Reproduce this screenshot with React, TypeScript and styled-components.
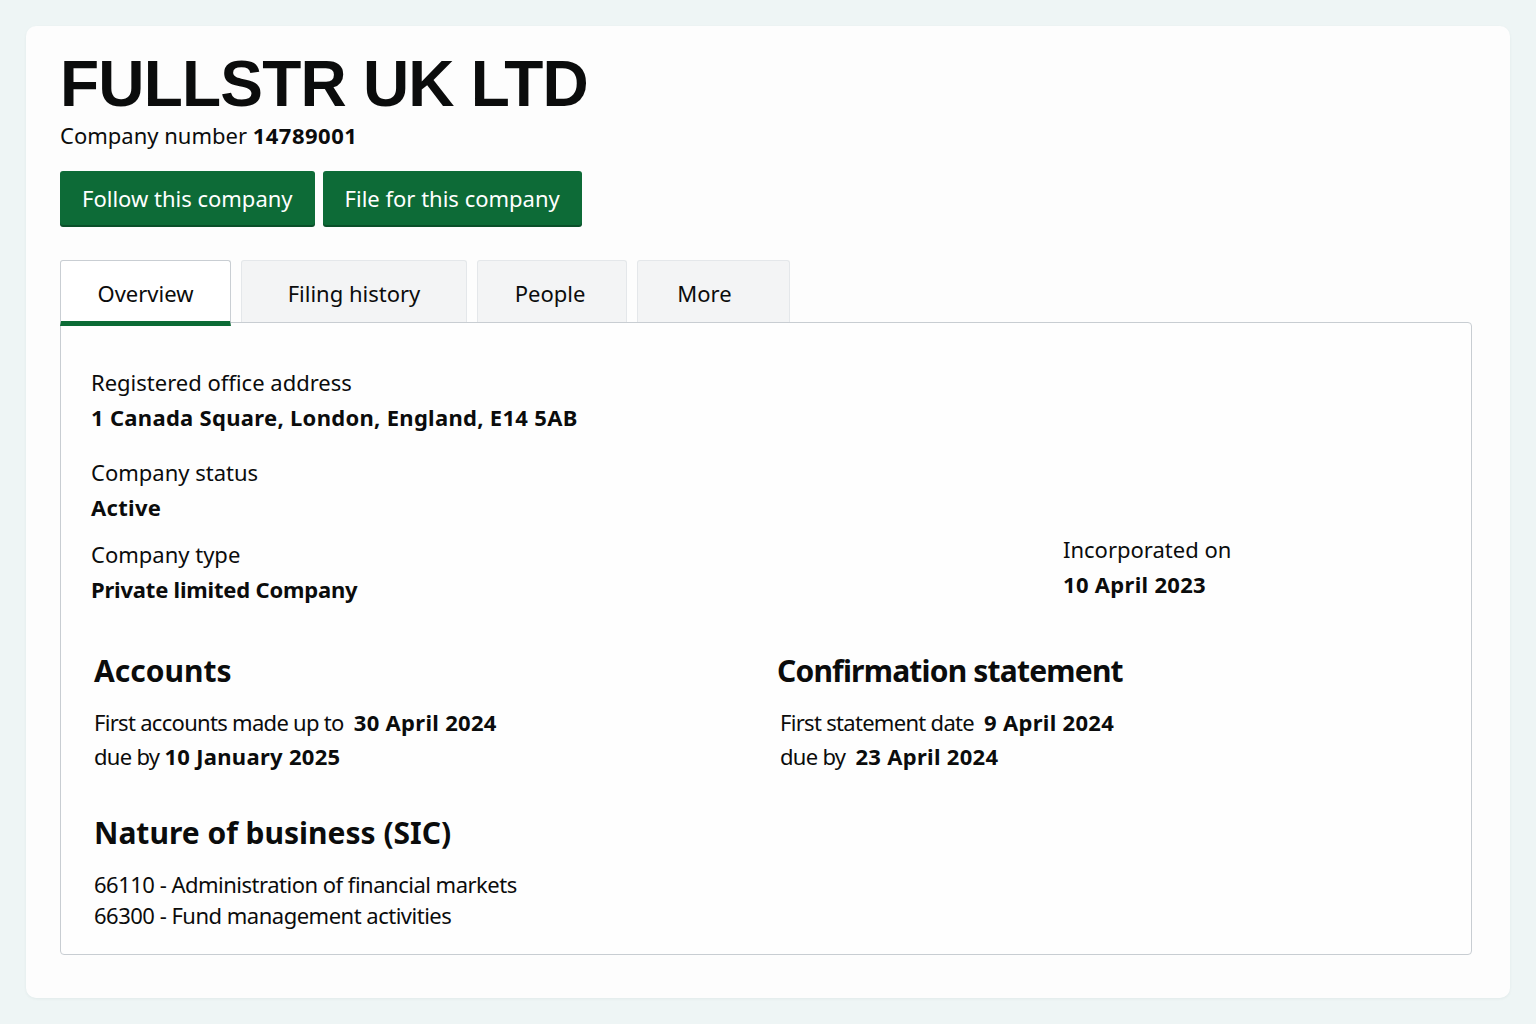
import styled, { createGlobalStyle } from "styled-components"

type Field = { label: string; value: string; gap: number }

const fields: Field[] = [
  { label: "Registered office address", value: "1 Canada Square, London, England, E14 5AB", gap: 25 },
  { label: "Company status", value: "Active", gap: 17 },
]

const tabs = [
  { name: "Overview", width: 171, shift: 0 },
  { name: "Filing history", width: 226, shift: 0 },
  { name: "People", width: 150, shift: 4 },
  { name: "More", width: 153, shift: 18 },
]

const sic = [
  "66110 - Administration of financial markets",
  "66300 - Fund management activities",
]

export default function App() {
  return (
    <>
      <GlobalStyle />
      <Page>
        <Card>
          <Title>FULLSTR UK LTD</Title>
          <CompanyNumber>
            Company number <Number>14789001</Number>
          </CompanyNumber>
          <Actions>
            <GreenButton>Follow this company</GreenButton>
            <GreenButton>File for this company</GreenButton>
          </Actions>

          <TabList>
            {tabs.map((tab, index) => (
              <Tab key={tab.name} $active={index === 0} $width={tab.width} $shift={tab.shift}>
                {tab.name}
              </Tab>
            ))}
          </TabList>

          <Panel>
            {fields.map((field) => (
              <FieldBlock key={field.label} $gap={field.gap}>
                <Label>{field.label}</Label>
                <Value>{field.value}</Value>
              </FieldBlock>
            ))}
            <TypeRow>
              <FieldBlock $gap={0}>
                <Label>Company type</Label>
                <Value $narrow>Private limited Company</Value>
              </FieldBlock>
              <Incorporated $gap={0}>
                <Label>Incorporated on</Label>
                <Value>10 April 2023</Value>
              </Incorporated>
            </TypeRow>

            <Columns>
              <Section>
                <Heading>Accounts</Heading>
                <Line>
                  First accounts made up to&nbsp; <Strong>30 April 2024</Strong>
                </Line>
                <Line>
                  due by <Strong>10 January 2025</Strong>
                </Line>
              </Section>
              <Section>
                <Heading $tight>Confirmation statement</Heading>
                <Line $indent>
                  First statement date&nbsp; <Strong>9 April 2024</Strong>
                </Line>
                <Line $indent>
                  due by&nbsp; <Strong>23 April 2024</Strong>
                </Line>
              </Section>
            </Columns>

            <Section $top={42}>
              <Heading $below={18}>Nature of business (SIC)</Heading>
              {sic.map((item) => (
                <SicLine key={item}>{item}</SicLine>
              ))}
            </Section>
          </Panel>
        </Card>
      </Page>
    </>
  )
}

const GlobalStyle = createGlobalStyle`
  html, body {
    margin: 0;
    padding: 0;
    background: #eef5f5;
  }
  body {
    font-family: "Noto Sans", "Liberation Sans", sans-serif;
    color: #0b0c0c;
  }
`

const Page = styled.div`
  padding: 26px;
  min-height: 1024px;
  box-sizing: border-box;
`

const Card = styled.div`
  background: #fdfdfd;
  border-radius: 10px;
  box-shadow: 0 1px 3px rgba(20, 60, 60, 0.06);
  padding: 22px 38px 43px 34px;
`

const Title = styled.h1`
  margin: 0;
  font-family: "Liberation Sans", Arial, sans-serif;
  font-size: 64px;
  line-height: 72px;
  font-weight: 700;
  letter-spacing: -0.8px;
  color: #0b0c0c;
`

const CompanyNumber = styled.div`
  font-size: 22px;
  line-height: 30px;
`

const Number = styled.b`
  font-weight: 700;
  letter-spacing: 0.5px;
`

const Actions = styled.div`
  display: flex;
  gap: 8px;
  margin-top: 21px;
`

const GreenButton = styled.button`
  height: 54px;
  padding: 0 22px;
  border: none;
  border-radius: 3px;
  background: #0d6b37;
  box-shadow: 0 2px 0 #0a4f29;
  color: #ffffff;
  font-family: "Noto Sans", sans-serif;
  font-size: 22px;
`

const TabList = styled.div`
  display: flex;
  gap: 10px;
  margin-top: 35px;
  align-items: flex-start;
`

const Tab = styled.div<{ $active?: boolean; $width: number; $shift: number }>`
  width: ${(p) => p.$width}px;
  height: ${(p) => (p.$active ? 66 : 62)}px;
  box-sizing: border-box;
  display: flex;
  align-items: center;
  justify-content: center;
  padding-top: ${(p) => (p.$active ? 4 : 2)}px;
  padding-right: ${(p) => p.$shift}px;
  font-size: 22px;
  border: 1px solid ${(p) => (p.$active ? "#c9ced3" : "#e4e7ea")};
  border-bottom: ${(p) => (p.$active ? "5px solid #0b6b35" : "none")};
  border-radius: 3px 3px 0 0;
  background: ${(p) => (p.$active ? "#ffffff" : "#f3f4f5")};
  position: relative;
  z-index: 1;
`

const Panel = styled.div`
  margin-top: -4px;
  border: 1px solid #c8cdd2;
  border-radius: 0 4px 4px 4px;
  padding: 44px 30px 23px 30px;
  background: #fefefe;
`

const FieldBlock = styled.div<{ $gap: number }>`
  display: flex;
  flex-direction: column;
  gap: 5px;
  margin-bottom: ${(p) => p.$gap}px;
`

const Label = styled.div`
  font-size: 22px;
  line-height: 30px;
`

const Value = styled.div<{ $narrow?: boolean }>`
  font-size: 22px;
  line-height: 30px;
  font-weight: 700;
  letter-spacing: ${(p) => (p.$narrow ? -0.2 : 0.3)}px;
`

const TypeRow = styled.div`
  display: flex;
  justify-content: space-between;
  align-items: flex-start;
`

const Incorporated = styled(FieldBlock)`
  width: 378px;
  margin-top: -5px;
`

const Columns = styled.div`
  display: grid;
  grid-template-columns: 683px 1fr;
  margin-top: 49px;
`

const Section = styled.div<{ $top?: number }>`
  padding-left: 3px;
  margin-top: ${(p) => p.$top ?? 0}px;
`

const Heading = styled.h2<{ $tight?: boolean; $below?: number }>`
  margin: 0 0 ${(p) => p.$below ?? 16}px;
  font-size: 30px;
  line-height: 36px;
  font-weight: 700;
  letter-spacing: ${(p) => (p.$tight ? -0.8 : 0)}px;
`

const Line = styled.div<{ $indent?: boolean }>`
  font-size: 22px;
  line-height: 34px;
  letter-spacing: -0.7px;
  padding-left: ${(p) => (p.$indent ? 3 : 0)}px;
`

const Strong = styled.b`
  font-weight: 700;
  letter-spacing: 0.3px;
`

const SicLine = styled.div`
  font-size: 22px;
  line-height: 31px;
  letter-spacing: -0.5px;
`
